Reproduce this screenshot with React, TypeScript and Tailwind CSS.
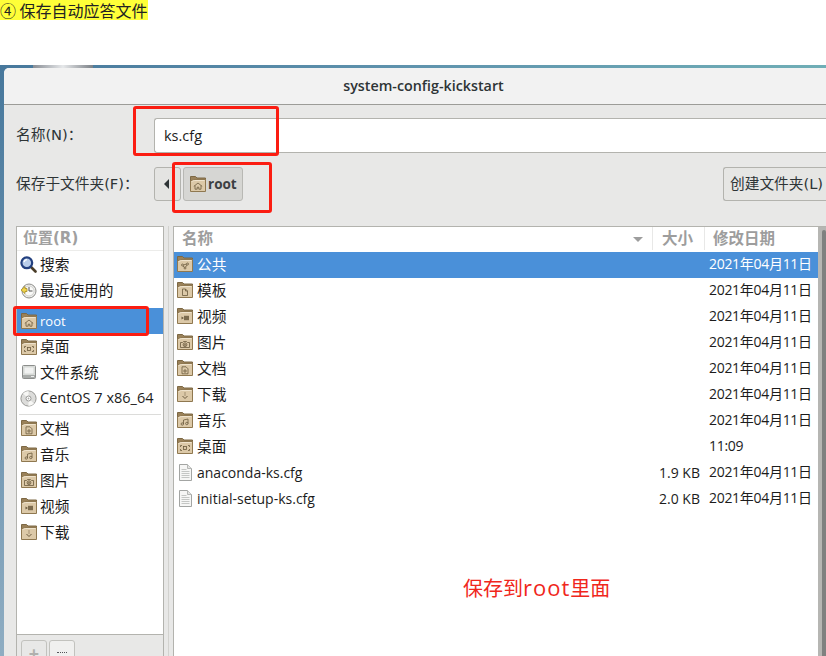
import React from "react";

const UI = "font-['Open_Sans','Noto_Sans_CJK_SC',sans-serif]";
const LABEL = "font-['DejaVu_Sans','Noto_Sans_CJK_SC',sans-serif]";

type Emblem = "share" | "template" | "video" | "photo" | "doc" | "down" | "music" | "desk" | "home";

function EmblemShape({ kind }: { kind: Emblem }) {
  const c = "#6b5a3e";
  const p = { fill: "none", stroke: c, strokeWidth: 0.8 };
  switch (kind) {
    case "share":
      return (<g {...p}><circle cx="5.5" cy="9" r="1" /><circle cx="10.5" cy="8" r="1" /><circle cx="8" cy="12" r="1" /><path d="M6.5 9 9.5 8M6 10l1.4 1.3M10 9l-1.4 2" /></g>);
    case "template":
      return (<g {...p}><path d="M5.5 7h3l2 2v4.5h-5zM8.5 7v2h2" /></g>);
    case "video":
      return (<g><path d="M4.5 8.5 7 10 4.5 11.5z" fill={c} /><rect x="7" y="7.8" width="5" height="4.4" fill={c} opacity="0.85" /></g>);
    case "photo":
      return (<g {...p}><path d="M3.5 8.5h2l1-1h3l1 1h2v5h-9z" /><circle cx="8" cy="10.7" r="1.9" /><circle cx="8" cy="10.7" r="0.8" /></g>);
    case "doc":
      return (<g {...p}><path d="M5 6.8h4l2 2v5H5z" /><path d="M7 10h2v2H7z" /></g>);
    case "down":
      return (<g {...p}><path d="M8 6.5v1M8 8.5v1M5.5 10 8 12.5 10.5 10" strokeWidth="1" /></g>);
    case "music":
      return (<g {...p}><path d="M6.5 12V8l4.5-1v4.5" /><circle cx="5.3" cy="12" r="1.2" /><circle cx="9.8" cy="11.5" r="1.2" /></g>);
    case "desk":
      return (<g {...p}><path d="M3.5 9V7.5H5M11 7.5h1.5V9M12.5 11v1.5H11M5 12.5H3.5V11" /><rect x="6.5" y="8.5" width="3" height="3" /></g>);
    case "home":
      return (<g {...p}><path d="M3.8 10.4 8 7l4.2 3.4M5 9.6v3.6h2.2v-2h1.6v2H11V9.6" /></g>);
  }
}

function Folder({ kind, size = 16 }: { kind: Emblem; size?: number }) {
  return (
    <svg width={size} height={size} viewBox="0 0 16 16" className="shrink-0">
      <path d="M.5.5h5l1.5 1.5h8.5v4H.5z" fill="#9a8159" stroke="#7d6844" strokeWidth="1" />
      <path d="M.5 5 4 3.5h11.5v12H.5z" fill="#dcc9a8" stroke="#8f7850" strokeWidth="1" strokeLinejoin="round" />
      <path d="M1.5 5.5 4.5 4.5h10" stroke="#efe3cd" strokeWidth="1" fill="none" />
      <EmblemShape kind={kind} />
    </svg>
  );
}

function FileIcon() {
  return (
    <svg width="16" height="17" viewBox="0 0 16 17" className="shrink-0">
      <path d="M2.5.5h8l4 4v12h-12z" fill="#f6f6f5" stroke="#a3a5a3" strokeWidth="1" />
      <path d="M10.5.5v4h4" fill="#e4e4e2" stroke="#b5b7b5" strokeWidth="1" />
      <path d="M4.5 5.5h5M4.5 7.5h8M4.5 9.5h8M4.5 11.5h8M4.5 13.5h8" stroke="#c4c6c4" strokeWidth="1" />
    </svg>
  );
}

function SearchIcon() {
  return (
    <svg width="17" height="17" viewBox="0 0 17 17" className="shrink-0">
      <path d="M10.5 10.5 15.5 15.5" stroke="#4a3d28" strokeWidth="2.6" strokeLinecap="round" />
      <circle cx="6.8" cy="6.8" r="5.4" fill="#b9cdea" stroke="#23407f" strokeWidth="2.2" />
      <path d="M4 6a3.2 3.2 0 0 1 3-2.4" stroke="#fff" strokeWidth="1.2" fill="none" />
    </svg>
  );
}

function RecentIcon() {
  return (
    <svg width="17" height="17" viewBox="0 0 17 17" className="shrink-0">
      <circle cx="9" cy="9" r="7" fill="#ececea" stroke="#8d8d8a" strokeWidth="1" />
      <circle cx="9" cy="9" r="5" fill="#fafaf8" stroke="#c7c7c4" strokeWidth="0.8" />
      <path d="M9 9V5M9 9h3.5" stroke="#555" strokeWidth="1" />
      <path d="M1 8 5 4.5v2h2v3H5v2z" fill="#f1d54f" stroke="#a68b1f" strokeWidth="0.8" />
    </svg>
  );
}

function DriveIcon() {
  return (
    <svg width="16" height="16" viewBox="0 0 16 16" className="shrink-0">
      <rect x="1.5" y="1.5" width="13" height="13" rx="1" fill="#dfe1df" stroke="#8c8e8c" />
      <rect x="3" y="3" width="10" height="7" fill="#f1f2f1" stroke="#c3c5c3" strokeWidth="0.6" />
      <path d="M2 11h12v3H2z" fill="#a9acaa" />
      <path d="M10 12.5h3" stroke="#eee" />
    </svg>
  );
}

function DiscIcon() {
  return (
    <svg width="17" height="17" viewBox="0 0 17 17" className="shrink-0">
      <circle cx="8.5" cy="8.5" r="7.6" fill="#dcdcda" stroke="#8d8d8a" strokeWidth="0.9" />
      <path d="M8.5 8.5 3 3.5A7.5 7.5 0 0 1 8.5 1zM8.5 8.5l5.5 5a7.5 7.5 0 0 1-5.5 2.4z" fill="#f7f7f5" />
      <circle cx="8.5" cy="8.5" r="2.5" fill="#fff" stroke="#8d8d8a" strokeWidth="0.9" />
      <circle cx="8.5" cy="8.5" r="0.9" fill="#a9a9a6" />
    </svg>
  );
}

function SideRow({ icon, label, active, h = "h-[26px]", size = "text-[14.7px]" }: { icon: React.ReactNode; label: string; active?: boolean; h?: string; size?: string }) {
  return (
    <div className={`${h} flex items-center gap-[3px] pl-[3px] ${size} ${active ? "bg-[#4a90d9] text-white" : "text-[#1c1c1c]"}`}>
      <span className="w-[17px] flex justify-center">{icon}</span>
      <span className="leading-none whitespace-nowrap">{label}</span>
    </div>
  );
}

function FileRow({ icon, name, size, date, active, latin }: { icon: React.ReactNode; name: string; size?: string; date: string; active?: boolean; latin?: boolean }) {
  return (
    <div className={`h-[26px] pb-[2px] flex items-center ${active ? "bg-[#4a90d9] text-white" : "text-[#1c1c1c]"}`}>
      <span className="w-[23px] pl-[3px] flex shrink-0">{icon}</span>
      <span className={`flex-1 whitespace-nowrap leading-none ${latin ? "text-[14px] pt-[2px]" : "text-[14.7px]"}`}>{name}</span>
      <span className="w-[60px] pr-[5px] pt-[2px] text-right text-[14px] leading-none">{size}</span>
      <span className="w-[113px] pl-[4px] text-[14px] leading-none whitespace-nowrap tracking-[-0.3px]">{date}</span>
    </div>
  );
}

const D = "2021年04月11日";

export default function App() {
  return (
    <div className={`relative w-[826px] h-[656px] overflow-hidden bg-white flex flex-col ${UI}`}>
      <div className="h-[65px] shrink-0">
        <span className="block w-fit h-[20px] leading-[20px] bg-[#ffff38] text-[16px] text-[#222] whitespace-nowrap font-['Noto_Sans_CJK_SC','Liberation_Sans',sans-serif]">
          ④ 保存自动应答文件
        </span>
      </div>

      <div className="flex-1 min-h-0 flex flex-col bg-gradient-to-b from-[#47789c] to-[#8fadc2]">
        <div className="h-[3px] shrink-0 bg-gradient-to-r from-[#47789c] via-[#5f93ad] to-[#70aeb6]" />
        <div className="flex-1 min-h-0 ml-[4px] flex flex-col rounded-tl-[5px] bg-[#e8e8e7] overflow-hidden">
          <div className="h-[37px] shrink-0 bg-[#f2f2f2] border-b border-[#9c9c98] flex items-center justify-center pl-[17px] pt-[1px]">
            <span className="text-[14.3px] font-semibold text-[#2e3436] leading-none">system-config-kickstart</span>
          </div>

          <div className="h-[48px] shrink-0 flex items-end pl-[12px]">
            <span className={`w-[138px] h-[35px] flex items-center text-[14.7px] text-[#2e3436] leading-none ${LABEL}`}>名称(N)：</span>
            <div className="flex-1 h-[35px] bg-white border border-[#b3b3ae] border-r-0 rounded-l-[3px] flex items-center pl-[9px] text-[14.5px] text-[#1c1c1c]">
              ks.cfg
            </div>
          </div>

          <div className="h-[34px] mt-[14px] shrink-0 flex items-center pl-[12px]">
            <span className={`w-[138px] text-[14.7px] text-[#2e3436] leading-none whitespace-nowrap ${LABEL}`}>保存于文件夹(F)：</span>
            <button className="w-[27px] h-[34px] rounded-[3px] border border-[#b3b3ae] bg-[#e4e4e2] flex items-center justify-center pr-[3px]">
              <span className="w-0 h-0 border-y-[5px] border-y-transparent border-r-[5px] border-r-[#2e3436]" />
            </button>
            <button className="ml-[2px] w-[60px] h-[34px] rounded-[3px] border border-[#b8b8b4] bg-[#d6d6d3] flex items-center gap-[2px] pl-[6px] text-[13.5px] font-bold text-[#3c4042]">
              <Folder kind="home" />
              root
            </button>
            <div className="flex-1" />
            <button className={`w-[103px] h-[34px] rounded-l-[3px] border border-r-0 border-[#b3b3ae] bg-[#e6e6e4] text-[14.7px] text-[#2e3436] whitespace-nowrap text-left pl-[6px] leading-none ${LABEL}`}>
              创建文件夹(L)
            </button>
          </div>

          <div className="flex-1 min-h-0 flex pt-[25px] pl-[12px]">
            <div className="w-[148px] shrink-0 flex flex-col bg-white border border-[#b3b3ae] border-b-0">
              <div className={`h-[24px] shrink-0 flex items-center pl-[6px] bg-white border-b border-[#ececea] text-[15px] font-bold text-[#a0a0a0] leading-none ${LABEL}`}>位置(R)</div>
              <SideRow icon={<SearchIcon />} label="搜索" />
              <SideRow icon={<RecentIcon />} label="最近使用的" />
              <div className="h-[5px]" />
              <SideRow icon={<Folder kind="home" />} label="root" active size="text-[13px]" />
              <SideRow icon={<Folder kind="desk" />} label="桌面" h="h-[25px]" />
              <SideRow icon={<DriveIcon />} label="文件系统" />
              <SideRow icon={<DiscIcon />} label="CentOS 7 x86_64" size="text-[14.5px]" />
              <div className="h-[4px] flex items-end px-[2px]">
                <div className="h-px w-full bg-[#dcdcda]" />
              </div>
              <SideRow icon={<Folder kind="doc" />} label="文档" />
              <SideRow icon={<Folder kind="music" />} label="音乐" />
              <SideRow icon={<Folder kind="photo" />} label="图片" />
              <SideRow icon={<Folder kind="video" />} label="视频" />
              <SideRow icon={<Folder kind="down" />} label="下载" />
              <div className="flex-1" />
              <div className="h-[22px] shrink-0 border-t border-[#b3b3ae] bg-[#e8e8e7] flex items-start gap-[2px] pl-[4px] pt-[5px]">
                <div className="w-[26px] h-[24px] rounded-[3px] border border-[#c2c2be] flex justify-center text-[#b0b0ad] text-[18px] font-bold leading-[24px]">+</div>
                <div className="w-[26px] h-[24px] rounded-[3px] border border-[#c2c2be] bg-[#f0f0ef] flex justify-center pt-[11px]">
                  <div className="w-[10px] h-px border-t border-dotted border-[#55555a]" />
                </div>
              </div>
            </div>

            <div className="w-[9px] shrink-0 flex justify-center">
              <div className="w-px h-full bg-[#d2d2cf]" />
            </div>

            <div className="w-[645px] shrink-0 flex flex-col bg-white border-l border-t border-[#b3b3ae]">
              <div className="h-[25px] pb-[2px] shrink-0 flex items-center text-[15.5px] font-bold text-[#9d9d9d] leading-none">
                <div className="flex-1 h-full flex items-center pl-[8px] relative border-r border-[#e8e8e7]">
                  名称
                  <span className="absolute right-[9px] top-[10px] w-0 h-0 border-x-[5px] border-x-transparent border-t-[5px] border-t-[#9d9d9d]" />
                </div>
                <div className="w-[52px] h-full flex items-center pl-[9px] border-r border-[#e8e8e7]">大小</div>
                <div className="w-[113px] h-full flex items-center pl-[8px]">修改日期</div>
              </div>
              <FileRow icon={<Folder kind="share" />} name="公共" date={D} active />
              <FileRow icon={<Folder kind="template" />} name="模板" date={D} />
              <FileRow icon={<Folder kind="video" />} name="视频" date={D} />
              <FileRow icon={<Folder kind="photo" />} name="图片" date={D} />
              <FileRow icon={<Folder kind="doc" />} name="文档" date={D} />
              <FileRow icon={<Folder kind="down" />} name="下载" date={D} />
              <FileRow icon={<Folder kind="music" />} name="音乐" date={D} />
              <FileRow icon={<Folder kind="desk" />} name="桌面" date="11:09" />
              <FileRow icon={<FileIcon />} name="anaconda-ks.cfg" size="1.9 KB" date={D} latin />
              <FileRow icon={<FileIcon />} name="initial-setup-ks.cfg" size="2.0 KB" date={D} latin />
            </div>
            <div className="flex-1 bg-[#b6b6b3] border-t border-[#b3b3ae] pl-[4px] pt-[3px]">
              <div className="h-full bg-[#7f8180] rounded-t-[3px]" />
            </div>
          </div>
        </div>
      </div>

      {/* wallpaper fragment above the window edge */}
      <div className="absolute left-[33px] top-[65px] w-[60px] h-[3px] bg-gradient-to-r from-[#8a8f96] via-[#e6e8ea] to-[#7d8288]" />

      {/* hand-drawn annotations laid over the screenshot */}
      <div className="absolute left-[133px] top-[106px] w-[146px] h-[50px] border-[3px] border-[#fb1d12] rounded-[3px]" />
      <div className="absolute left-[172px] top-[162px] w-[100px] h-[51px] border-[3px] border-[#fb1d12] rounded-[3px]" />
      <div className="absolute left-[13px] top-[306px] w-[136px] h-[30px] border-[3px] border-[#fb1d12] rounded-[3px]" />
      <span className="absolute left-[463px] top-[574px] text-[20px] leading-[26px] text-[#f0271c] font-['Open_Sans','Noto_Sans_CJK_SC',sans-serif] whitespace-nowrap">
        保存到<span className="text-[22px] tracking-[1px]">root</span>里面
      </span>
    </div>
  );
}
